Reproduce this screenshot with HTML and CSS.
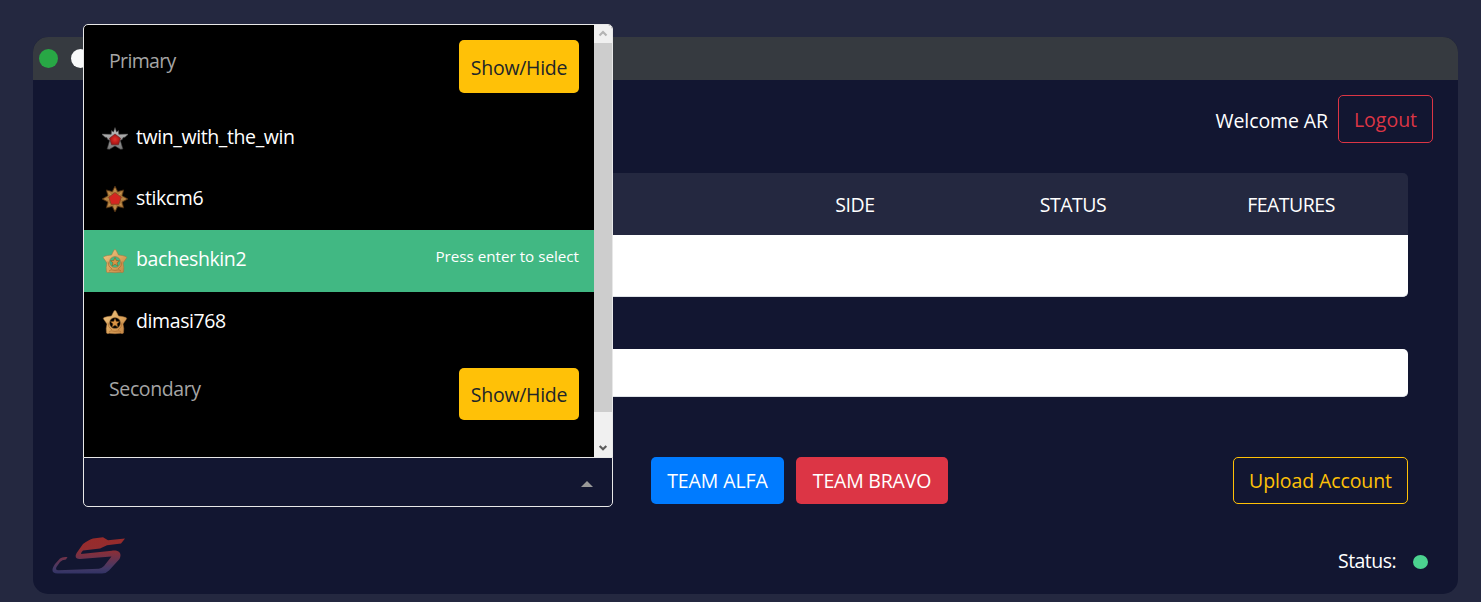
FILE: index.html
```html
<!DOCTYPE html>
<html lang="en">
<head>
<meta charset="utf-8">
<title>Accounts</title>
<link rel="stylesheet" href="styles.css">
</head>
<body>
<main class="window">
  <div class="titlebar"><i class="dot green"></i><i class="dot white"></i></div>
  <header class="top"><span class="t welcome">Welcome AR</span><button class="btn logout"><span class="t">Logout</span></button></header>
  <section class="content">
    <div class="thead"><span></span><span class="t side">SIDE</span><span class="t stat">STATUS</span><span class="t feat">FEATURES</span></div>
    <div class="row-white"></div>
    <div class="row-white second"></div>
    <div class="actions">
      <div class="select">
        <i class="caret"></i>
        <div class="menu">
          <div class="list">
            <div class="group"><span class="t prim">Primary</span><button class="btn toggle"><span class="t">Show/Hide</span></button></div>
            <div class="option first">
              <svg class="medal" viewBox="0 0 26 26"><defs><linearGradient id="sv" x1="0" y1="0" x2="0" y2="1"><stop offset="0" stop-color="#c8c8c8"/><stop offset="1" stop-color="#777"/></linearGradient><linearGradient id="gd" x1="0" y1="0" x2="1" y2="1"><stop offset="0" stop-color="#f0c988"/><stop offset=".55" stop-color="#dba45c"/><stop offset="1" stop-color="#c08040"/></linearGradient><radialGradient id="rd"><stop offset="0" stop-color="#e2322c"/><stop offset="1" stop-color="#a31212"/></radialGradient></defs>
              <path d="M13 1.500L14.500 6l2-1.500.3 3.800L26.500 8 23 11.200l-2 .5-.5 1.600-2.200 1.200 2.600 8.500-2.400.3L13 20l-5.500 3.300-2.400-.3 2.600-8.500-2.200-1.200-.5-1.600-2-.5L-.5 8l9.700.3.3-3.800 2 1.500z" fill="url(#sv)" stroke="#3c3c3c" stroke-width=".6"/><path d="M13 8l5.500 4.200-2 6.600h-7l-2-6.600z" fill="url(#rd)" stroke="#5b2525" stroke-width=".6"/></svg>
              <span class="t twin">twin_with_the_win</span></div>
            <div class="option">
              <svg class="medal" viewBox="0 0 26 26"><path d="M13 0l2.700 5.500 6-1.600-1.500 5.800L26 13l-5.800 3 1.500 6-6-1.500L13 26l-2.700-5.500-6 1.500 1.500-6L0 13l5.800-3.300-1.500-5.800 6 1.600z" fill="#ab7838" stroke="#4a2d12" stroke-width=".8"/><path d="M13 3v20M3 13h20M6.500 6.500l13 13M19.500 6.500l-13 13" stroke="#c49352" stroke-width="1.200"/><path d="M13 6.500l6.200 4.700-2.300 7.100H9.100l-2.300-7.100z" fill="#d42621" stroke="#8b431d" stroke-width=".9"/></svg>
              <span class="t stik">stikcm6</span></div>
            <div class="option active">
              <svg class="medal" viewBox="0 0 26 26"><g id="gold"><path fill-rule="evenodd" d="M13 1.300Q14.200 1.800 15 4l1.500 3q4 .3 7.500 1.500 1.200.6.300 1.800L21 15l.8 4.500-.3 4.500q-1 1.100-3 .3L13 24.700l-5.500-.4q-2 .8-3-.3l-.3-4.500L5 15l-3.300-4.700q-.9-1.200.3-1.800Q5.500 7.300 9.500 7L11 4q.8-2.200 2-2.700zM13 8.500a5.500 5.500 0 1 0 0 11A5.500 5.500 0 1 0 13 8.500z" fill="url(#gd)" stroke="#a5703a" stroke-width=".5"/><path d="M6 13.500Q6 19 10 21M20 13.500Q20 19 16 21M7 23l2-1.200 4 .6 4-.6 2 1.200" fill="none" stroke="#a76a2c" stroke-width=".7"/><path d="M13 9.500l1.300 3 3.200.2-2.500 2.100.8 3.200-2.800-1.700-2.800 1.700.8-3.200-2.500-2.100 3.200-.2z" fill="#d99445" stroke="#80501c" stroke-width=".5"/></g></svg>
              <span class="t bach">bacheshkin2</span><span class="t hint">Press enter to select</span></div>
            <div class="option">
              <svg class="medal" viewBox="0 0 26 26"><use href="#gold"/></svg>
              <span class="t dima">dimasi768</span></div>
            <div class="group low"><span class="t sec">Secondary</span><button class="btn toggle"><span class="t">Show/Hide</span></button></div>
          </div>
          <div class="scroll">
            <svg class="arrow" viewBox="0 0 18 18"><path d="M5.500 10.500L9 7l3.500 3.500" fill="none" stroke="#b4b4b4" stroke-width="2.200"/></svg>
            <div class="thumb"></div>
            <svg class="arrow" viewBox="0 0 18 18"><path d="M5.700 7L9 10.300 12.300 7" fill="none" stroke="#5c5c5c" stroke-width="2.200"/></svg>
          </div>
        </div>
      </div>
      <button class="btn alfa"><span class="t">TEAM ALFA</span></button>
      <button class="btn bravo"><span class="t">TEAM BRAVO</span></button>
      <button class="btn upload"><span class="t">Upload Account</span></button>
    </div>
  </section>
  <footer class="foot">
    <svg class="logo" viewBox="0 0 74 40"><defs><linearGradient id="lg" gradientUnits="userSpaceOnUse" x1="0" y1="2" x2="0" y2="38"><stop offset="0" stop-color="#982b2a"/><stop offset=".3" stop-color="#942d30"/><stop offset=".55" stop-color="#70324a"/><stop offset=".85" stop-color="#423967"/><stop offset="1" stop-color="#303264"/></linearGradient></defs>
      <path d="M31 8Q37 3.500 41 2.500L51 1.300l5 3L73 2.500 69 7.500 55 9.200 48 12.600 31 14.500Q29 16.300 29 18L60 14.700C68 14 70 18 67.500 23L57 34.500Q54 37.600 50 37.600H5.500C-1 37.600-.5 33 3 28L8 22.500Q10 20.500 15.500 21L14 23.500Q10 23.500 8 26L4.500 31Q3 34.300 6.500 34.300L47 32.700Q50 32.400 52 30L59.500 20.500 28 22.900C23.500 23 22.500 20.500 25 16.500z" fill="url(#lg)"/></svg>
    <span class="t state">Status:</span><i class="led"></i>
  </footer>
</main>
</body>
</html>
```
FILE: styles.css
```css
* { box-sizing: border-box; }
body { margin: 0; height: 602px; padding: 37px 23px 8px 33px; background: #242840; color: #fff; font: 19.5px/30px "Open Sans", "Noto Sans", sans-serif; overflow: hidden; }
.t { white-space: nowrap; }
.window { height: 557px; border-radius: 15px; background: #121631; }
.titlebar { height: 43px; background: #363a40; border-radius: 15px 15px 0 0; display: flex; align-items: center; gap: 13px; padding-left: 6px; }
.dot { width: 19px; height: 19px; border-radius: 50%; }
.green { background: #28a745; }
.white { background: #f8f9fa; }
.top { height: 93px; padding: 15px 25px 0 0; display: flex; justify-content: flex-end; align-items: flex-start; gap: 10px; }
.welcome { margin-top: 11px; letter-spacing: -.1px; }
.btn { font: inherit; margin: 0; padding: 0; border: 0; border-radius: 5px; color: #fff; display: flex; align-items: center; justify-content: center; }
.logout { width: 95px; height: 48px; padding-top: 2px; background: none; border: 1px solid #dc3545; color: #dc3545; }
.content { padding: 0 50px; }
.thead { height: 62px; background: #242840; border-radius: 5px 5px 0 0; display: grid; grid-template-columns: 1fr 218px 218px 218px; padding: 2px 8px 0 0; align-items: center; text-align: center; }
.side { letter-spacing: -.4px; }
.stat, .feat { letter-spacing: -.5px; }
.row-white { height: 62px; background: #fff; border-bottom: 1px solid #dee2e6; border-radius: 0 0 5px 5px; }
.second { height: 48px; margin-top: 52px; border-radius: 5px; }
.actions { margin-top: 60px; display: flex; align-items: flex-start; }
.select { position: relative; width: 530px; height: 50px; margin-right: 38px; border: 1px solid #e8e8e8; border-radius: 0 0 5px 5px; display: flex; justify-content: flex-end; padding: 23px 19px 0 0; }
.caret { width: 0; height: 0; border: 6px solid transparent; border-top: 0; border-bottom-color: #999; }
.menu { position: absolute; left: -1px; bottom: 48px; width: 530px; height: 434px; border: 1px solid #e8e8e8; border-radius: 5px 5px 0 0; background: #000; display: flex; overflow: hidden; z-index: 2; }
.list { flex: 1; }
.group { height: 82px; padding: 15px 15px 0 25px; display: flex; justify-content: space-between; color: #a5a5a5; }
.group > .t { margin-top: 6px; }
.prim { letter-spacing: -.65px; }
.sec { letter-spacing: -.38px; }
.low .toggle { height: 52px; }
.toggle { width: 120px; height: 53px; padding-top: 2px; background: #ffc107; color: #212529; letter-spacing: -.28px; }
.option { height: 61.5px; display: flex; align-items: center; padding: 0 15px 0 18px; }
.first { padding-top: 2px; }
.option > .t { margin-bottom: 3px; }
.twin, .bach { letter-spacing: -.4px; }
.stik, .dima { letter-spacing: -.4px; }
.active { background: #41b883; }
.medal { width: 26px; height: 26px; margin-right: 8px; flex: none; }
.option > .hint { margin: 0 0 9px auto; font-size: 15.2px; }
.scroll { width: 18px; background: #f0f0f0; display: flex; flex-direction: column; }
.arrow { width: 18px; height: 18px; display: block; }
.thumb { height: 369px; background: #cdcdcd; margin-bottom: 27px; flex: none; }
.alfa { width: 133px; height: 47px; background: #007bff; margin-right: 12px; letter-spacing: -.1px; }
.bravo { width: 152px; height: 47px; background: #dc3545; letter-spacing: -.2px; }
.upload { width: 175px; height: 47px; margin-left: auto; background: none; border: 1px solid #ffc107; color: #ffc107; letter-spacing: -.1px; }
.foot { height: 87px; padding: 28px 30px 0 19px; display: flex; align-items: flex-start; }
.logo { width: 74px; height: 40px; margin-top: 1px; }
.state { margin: 11px 17px 0 auto; letter-spacing: -.55px; }
.led { width: 15px; height: 14px; margin-top: 20px; border-radius: 50%; background: #4bd28f; }
```
